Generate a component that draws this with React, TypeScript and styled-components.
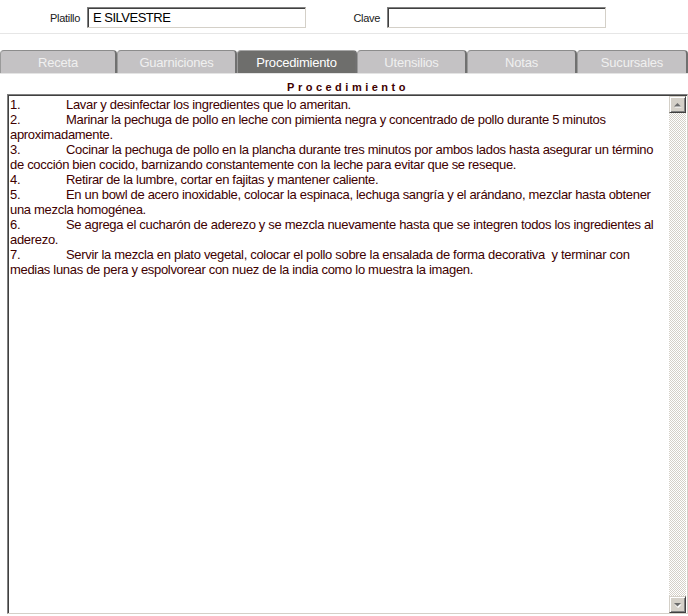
import React from "react";
import styled, { createGlobalStyle } from "styled-components";

const GlobalStyle = createGlobalStyle`
  html, body {
    margin: 0;
    padding: 0;
    background: #ffffff;
    font-family: "Liberation Sans", Arial, sans-serif;
    overflow: hidden;
  }
`;

const Page = styled.div`
  width: 688px;
  height: 616px;
  display: flex;
  flex-direction: column;
`;

const FieldRow = styled.div`
  display: flex;
  align-items: center;
  padding-top: 7px;
  height: 21px;
`;

const Label = styled.label<{ $width: number }>`
  width: ${(p) => p.$width}px;
  text-align: right;
  padding-right: 7px;
  box-sizing: border-box;
  font-size: 11px;
  letter-spacing: -0.3px;
  color: #202020;
`;

const TextInput = styled.input`
  width: 219px;
  height: 21px;
  box-sizing: border-box;
  margin: 0;
  padding: 0 5px;
  font-family: "Liberation Sans", Arial, sans-serif;
  font-size: 13px;
  letter-spacing: -0.5px;
  color: #000000;
  background: #ffffff;
  border: 1px solid;
  border-color: #808080 #d4d0c8 #d4d0c8 #808080;
  box-shadow: inset 1px 1px 0 #404040;
  outline: none;
`;

const Separator = styled.div`
  margin-top: 5px;
  height: 1px;
  background: #e6e6e6;
`;

const TabBar = styled.div`
  display: flex;
  margin-top: 16px;
  border-bottom: 1px solid #e4e4e4;
`;

const Tab = styled.div<{ $width: number; $active?: boolean }>`
  width: ${(p) => p.$width}px;
  height: 23px;
  box-sizing: border-box;
  display: flex;
  align-items: center;
  justify-content: center;
  font-size: 13px;
  letter-spacing: -0.2px;
  color: ${(p) => (p.$active ? "#ffffff" : "#f0f0f0")};
  background: ${(p) => (p.$active ? "#6e6e6c" : "#c4c2c4")};
  border-top: 1px solid ${(p) => (p.$active ? "#a8a8a8" : "#8c8c8c")};
  border-left: 1px solid #9a9a9a;
  border-right: 2px solid #707070;
  border-radius: 4px 4px 0 0;
  cursor: pointer;
`;

const SectionTitle = styled.div`
  height: 20px;
  display: flex;
  align-items: flex-end;
  justify-content: center;
  padding-left: 8px;
  font-size: 11px;
  font-weight: bold;
  letter-spacing: 3.5px;
  color: #400000;
  line-height: 13px;
`;

const Editor = styled.div`
  margin-left: 7px;
  height: 520px;
  display: flex;
  box-sizing: border-box;
  border: 1px solid;
  border-color: #808080 #d4d0c8 #d4d0c8 #808080;
  box-shadow: inset 1px 1px 0 #404040;
  padding: 1px 1px 0 1px;
  background: #ffffff;
`;

const Body = styled.textarea`
  flex: 1;
  margin: 0;
  border: none;
  outline: none;
  resize: none;
  overflow: hidden;
  padding: 1px 2px 0 1px;
  font-family: "Liberation Sans", Arial, sans-serif;
  font-size: 13px;
  letter-spacing: -0.31px;
  line-height: 15px;
  color: #400000;
  tab-size: 56px;
  -moz-tab-size: 56px;
  white-space: pre-wrap;
  background: transparent;
`;

const ScrollTrack = styled.div`
  width: 17px;
  display: flex;
  flex-direction: column;
  justify-content: space-between;
  background: repeating-conic-gradient(#d4d0c8 0 25%, #ffffff 0 50%) 0 0 / 2px 2px;
`;

const ScrollButton = styled.div`
  width: 17px;
  height: 17px;
  box-sizing: border-box;
  display: flex;
  align-items: center;
  justify-content: center;
  background: #d4d0c8;
  border: 1px solid;
  border-color: #d4d0c8 #404040 #404040 #d4d0c8;
  box-shadow: inset 1px 1px 0 #ffffff, inset -1px -1px 0 #808080;
`;

function Arrow({ down }: { down?: boolean }) {
  return (
    <svg width="9" height="6" viewBox="0 0 9 6">
      {down ? (
        <>
          <path d="M1 2h7l-3.5 3.5z" fill="#ffffff" transform="translate(0.6 0.6)" />
          <path d="M1 1h7l-3.5 3.5z" fill="#6c6c6c" />
        </>
      ) : (
        <>
          <path d="M1 5h7l-3.5-3.5z" fill="#ffffff" transform="translate(0.6 0.6)" />
          <path d="M1 4.5h7l-3.5-3.5z" fill="#6c6c6c" />
        </>
      )}
    </svg>
  );
}

const tabs = [
  { label: "Receta", width: 117 },
  { label: "Guarniciones", width: 120 },
  { label: "Procedimiento", width: 120, active: true },
  { label: "Utensilios", width: 110 },
  { label: "Notas", width: 110 },
  { label: "Sucursales", width: 111 },
];

const steps = [
  "1.\tLavar y desinfectar los ingredientes que lo ameritan.",
  "2.\tMarinar la pechuga de pollo en leche con pimienta negra y concentrado de pollo durante 5 minutos aproximadamente.",
  "3.\tCocinar la pechuga de pollo en la plancha durante tres minutos por ambos lados hasta asegurar un término de cocción bien cocido, barnizando constantemente con la leche para evitar que se reseque.",
  "4.\tRetirar de la lumbre, cortar en fajitas y mantener caliente.",
  "5.\tEn un bowl de acero inoxidable, colocar la espinaca, lechuga sangría y el arándano, mezclar hasta obtener una mezcla homogénea.",
  "6.\tSe agrega el cucharón de aderezo y se mezcla nuevamente hasta que se integren todos los ingredientes al aderezo.",
  "7.\tServir la mezcla en plato vegetal, colocar el pollo sobre la ensalada de forma decorativa  y terminar con medias lunas de pera y espolvorear con nuez de la india como lo muestra la imagen.",
];

export default function App() {
  return (
    <Page>
      <GlobalStyle />
      <FieldRow>
        <Label $width={87}>Platillo</Label>
        <TextInput defaultValue="E SILVESTRE" />
        <Label $width={81}>Clave</Label>
        <TextInput defaultValue="" />
      </FieldRow>
      <Separator />
      <TabBar>
        {tabs.map((t) => (
          <Tab key={t.label} $width={t.width} $active={t.active}>
            {t.label}
          </Tab>
        ))}
      </TabBar>
      <SectionTitle>Procedimiento</SectionTitle>
      <Editor>
        <Body readOnly defaultValue={steps.join("\n")} />
        <ScrollTrack>
          <ScrollButton>
            <Arrow />
          </ScrollButton>
          <ScrollButton>
            <Arrow down />
          </ScrollButton>
        </ScrollTrack>
      </Editor>
    </Page>
  );
}
